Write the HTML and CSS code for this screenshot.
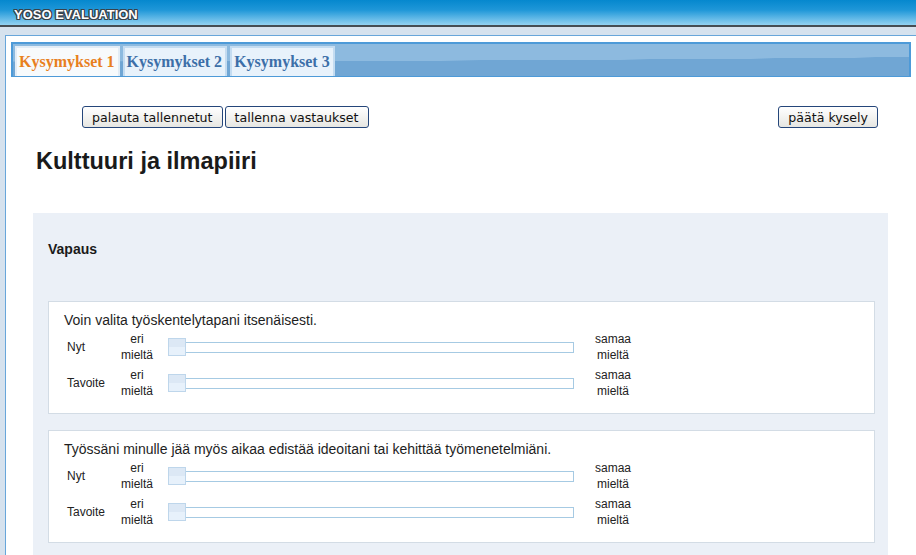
FILE: index.html
```html
<!DOCTYPE html>
<html lang="fi">
<head>
<meta charset="utf-8">
<title>YOSO Evaluation</title>
<link rel="stylesheet" href="styles.css">
</head>
<body>
<div class="topbar"><span class="brand">YOSO EVALUATION</span></div>
<div class="panel">
  <div class="tabbar">
    <span class="tab active">Kysymykset 1</span>
    <span class="tab">Kysymykset 2</span>
    <span class="tab">Kysymykset 3</span>
  </div>
  <div class="content">
    <div class="actions">
      <div class="group">
        <button class="btn">palauta tallennetut</button>
        <button class="btn">tallenna vastaukset</button>
      </div>
      <button class="btn">päätä kysely</button>
    </div>
    <h1 class="title">Kulttuuri ja ilmapiiri</h1>
    <div class="section">
      <h2 class="section-title">Vapaus</h2>
      <div class="card">
        <div class="q">Voin valita työskentelytapani itsenäisesti.</div>
        <div class="row">
          <span class="lbl">Nyt</span>
          <span class="lo">eri<br>mieltä</span>
          <span class="slider"><span class="track"></span><span class="handle"></span></span>
          <span class="hi">samaa<br>mieltä</span>
        </div>
        <div class="row">
          <span class="lbl">Tavoite</span>
          <span class="lo">eri<br>mieltä</span>
          <span class="slider"><span class="track"></span><span class="handle"></span></span>
          <span class="hi">samaa<br>mieltä</span>
        </div>
      </div>
      <div class="card">
        <div class="q">Työssäni minulle jää myös aikaa edistää ideoitani tai kehittää työmenetelmiäni.</div>
        <div class="row">
          <span class="lbl">Nyt</span>
          <span class="lo">eri<br>mieltä</span>
          <span class="slider"><span class="track"></span><span class="handle"></span></span>
          <span class="hi">samaa<br>mieltä</span>
        </div>
        <div class="row">
          <span class="lbl">Tavoite</span>
          <span class="lo">eri<br>mieltä</span>
          <span class="slider"><span class="track"></span><span class="handle"></span></span>
          <span class="hi">samaa<br>mieltä</span>
        </div>
      </div>
    </div>
  </div>
</div>
</body>
</html>
```
FILE: styles.css
```css
html, body {
  margin: 0;
  padding: 0;
}
body {
  background: #d6e2ee;
  font-family: "Liberation Sans", Arial, sans-serif;
  color: #1e1e1e;
  overflow: hidden;
  height: 555px;
}
.topbar {
  height: 27px;
  box-sizing: border-box;
  padding: 3px 0 0 14px;
  display: flex;
  align-items: center;
  background: linear-gradient(#0588ce 0%, #1f97d8 40%, #93d2f2 100%);
  border-bottom: 2px solid #464d54;
}
.brand {
  color: #fff;
  font: bold 13px/15px "Liberation Sans", Arial, sans-serif;
  text-shadow: 1px 0 0 #39424a, -1px 0 0 #39424a, 0 1px 0 #39424a, 0 -1px 0 #39424a, 1px 1px 0 #39424a, -1px -1px 0 #39424a, 1px -1px 0 #39424a, -1px 1px 0 #39424a;
}
.panel {
  margin: 8px 0 0 5px;
  border: 1px solid #68a6da;
  border-right: none;
  background: #fff;
  padding-top: 6px;
  height: 700px;
}
.tabbar {
  margin: 0 5px;
  height: 30px;
  padding: 2px 0 0 2px;
  display: flex;
  gap: 3px;
  border: 2px solid #4d9ad8;
  border-bottom-width: 1px;
  background: radial-gradient(ellipse 150% 55% at 0% 0%, #8dbadf 99%, #70a6d4 100%);
}
.tab {
  height: 30px;
  box-sizing: border-box;
  padding: 0 3px 0 2px;
  display: flex;
  align-items: center;
  font: bold 16px "Liberation Serif", "Times New Roman", serif;
  color: #3c6fa8;
  background: #e8f2fb;
  border: 2px solid #c4dcf1;
  border-bottom: none;
}
.tab.active {
  color: #e8801e;
  background: #f7fafc;
  border-color: #e2ecf6;
}
.content {
  padding: 29px 28px 0 27px;
}
.actions {
  display: flex;
  justify-content: space-between;
  padding: 0 10px 0 49px;
}
.group {
  display: flex;
  gap: 2px;
}
.btn {
  margin: 0;
  height: 22px;
  padding: 0 9px;
  font: 12.6px "DejaVu Sans", Verdana, sans-serif;
  color: #111;
  border: 1px solid #25467a;
  border-radius: 3px;
  background: linear-gradient(#ffffff, #f3f3f1 50%, #e6e6e2);
}
.title {
  margin: 19px 0 0 3px;
  font: bold 23.5px/28px "Liberation Sans", Arial, sans-serif;
  color: #1a1a1a;
}
.section {
  margin-top: 38px;
  padding: 27px 13px 20px 15px;
  background: #ebf0f7;
}
.section-title {
  margin: 0 0 43px;
  font: bold 14px/18px "Liberation Sans", Arial, sans-serif;
  color: #1a1a1a;
}
.card {
  background: #fff;
  border: 1px solid #d3dce5;
  padding: 9px 15px 12px;
  margin-bottom: 16px;
}
.q {
  font-size: 14px;
  line-height: 18px;
  color: #1e1e1e;
}
.row {
  display: flex;
  align-items: center;
  height: 36px;
  font-size: 12px;
  color: #222;
}
.lbl {
  width: 45px;
  padding-left: 3px;
}
.lo {
  width: 50px;
  text-align: center;
  line-height: 16px;
}
.slider {
  position: relative;
  width: 406px;
  height: 18px;
  margin-left: 6px;
}
.track {
  position: absolute;
  left: 0;
  right: 0;
  top: 4px;
  height: 11px;
  box-sizing: border-box;
  border: 1px solid #a6cae3;
  background: #fff;
}
.handle {
  position: absolute;
  left: 0;
  top: 0;
  width: 18px;
  height: 18px;
  box-sizing: border-box;
  border: 1px solid #bed6eb;
  background: linear-gradient(#dce8f5 0%, #dce8f5 50%, #e7f1fb 51%, #e7f1fb 100%);
}
.hi {
  width: 78px;
  text-align: center;
  line-height: 16px;
}
```
